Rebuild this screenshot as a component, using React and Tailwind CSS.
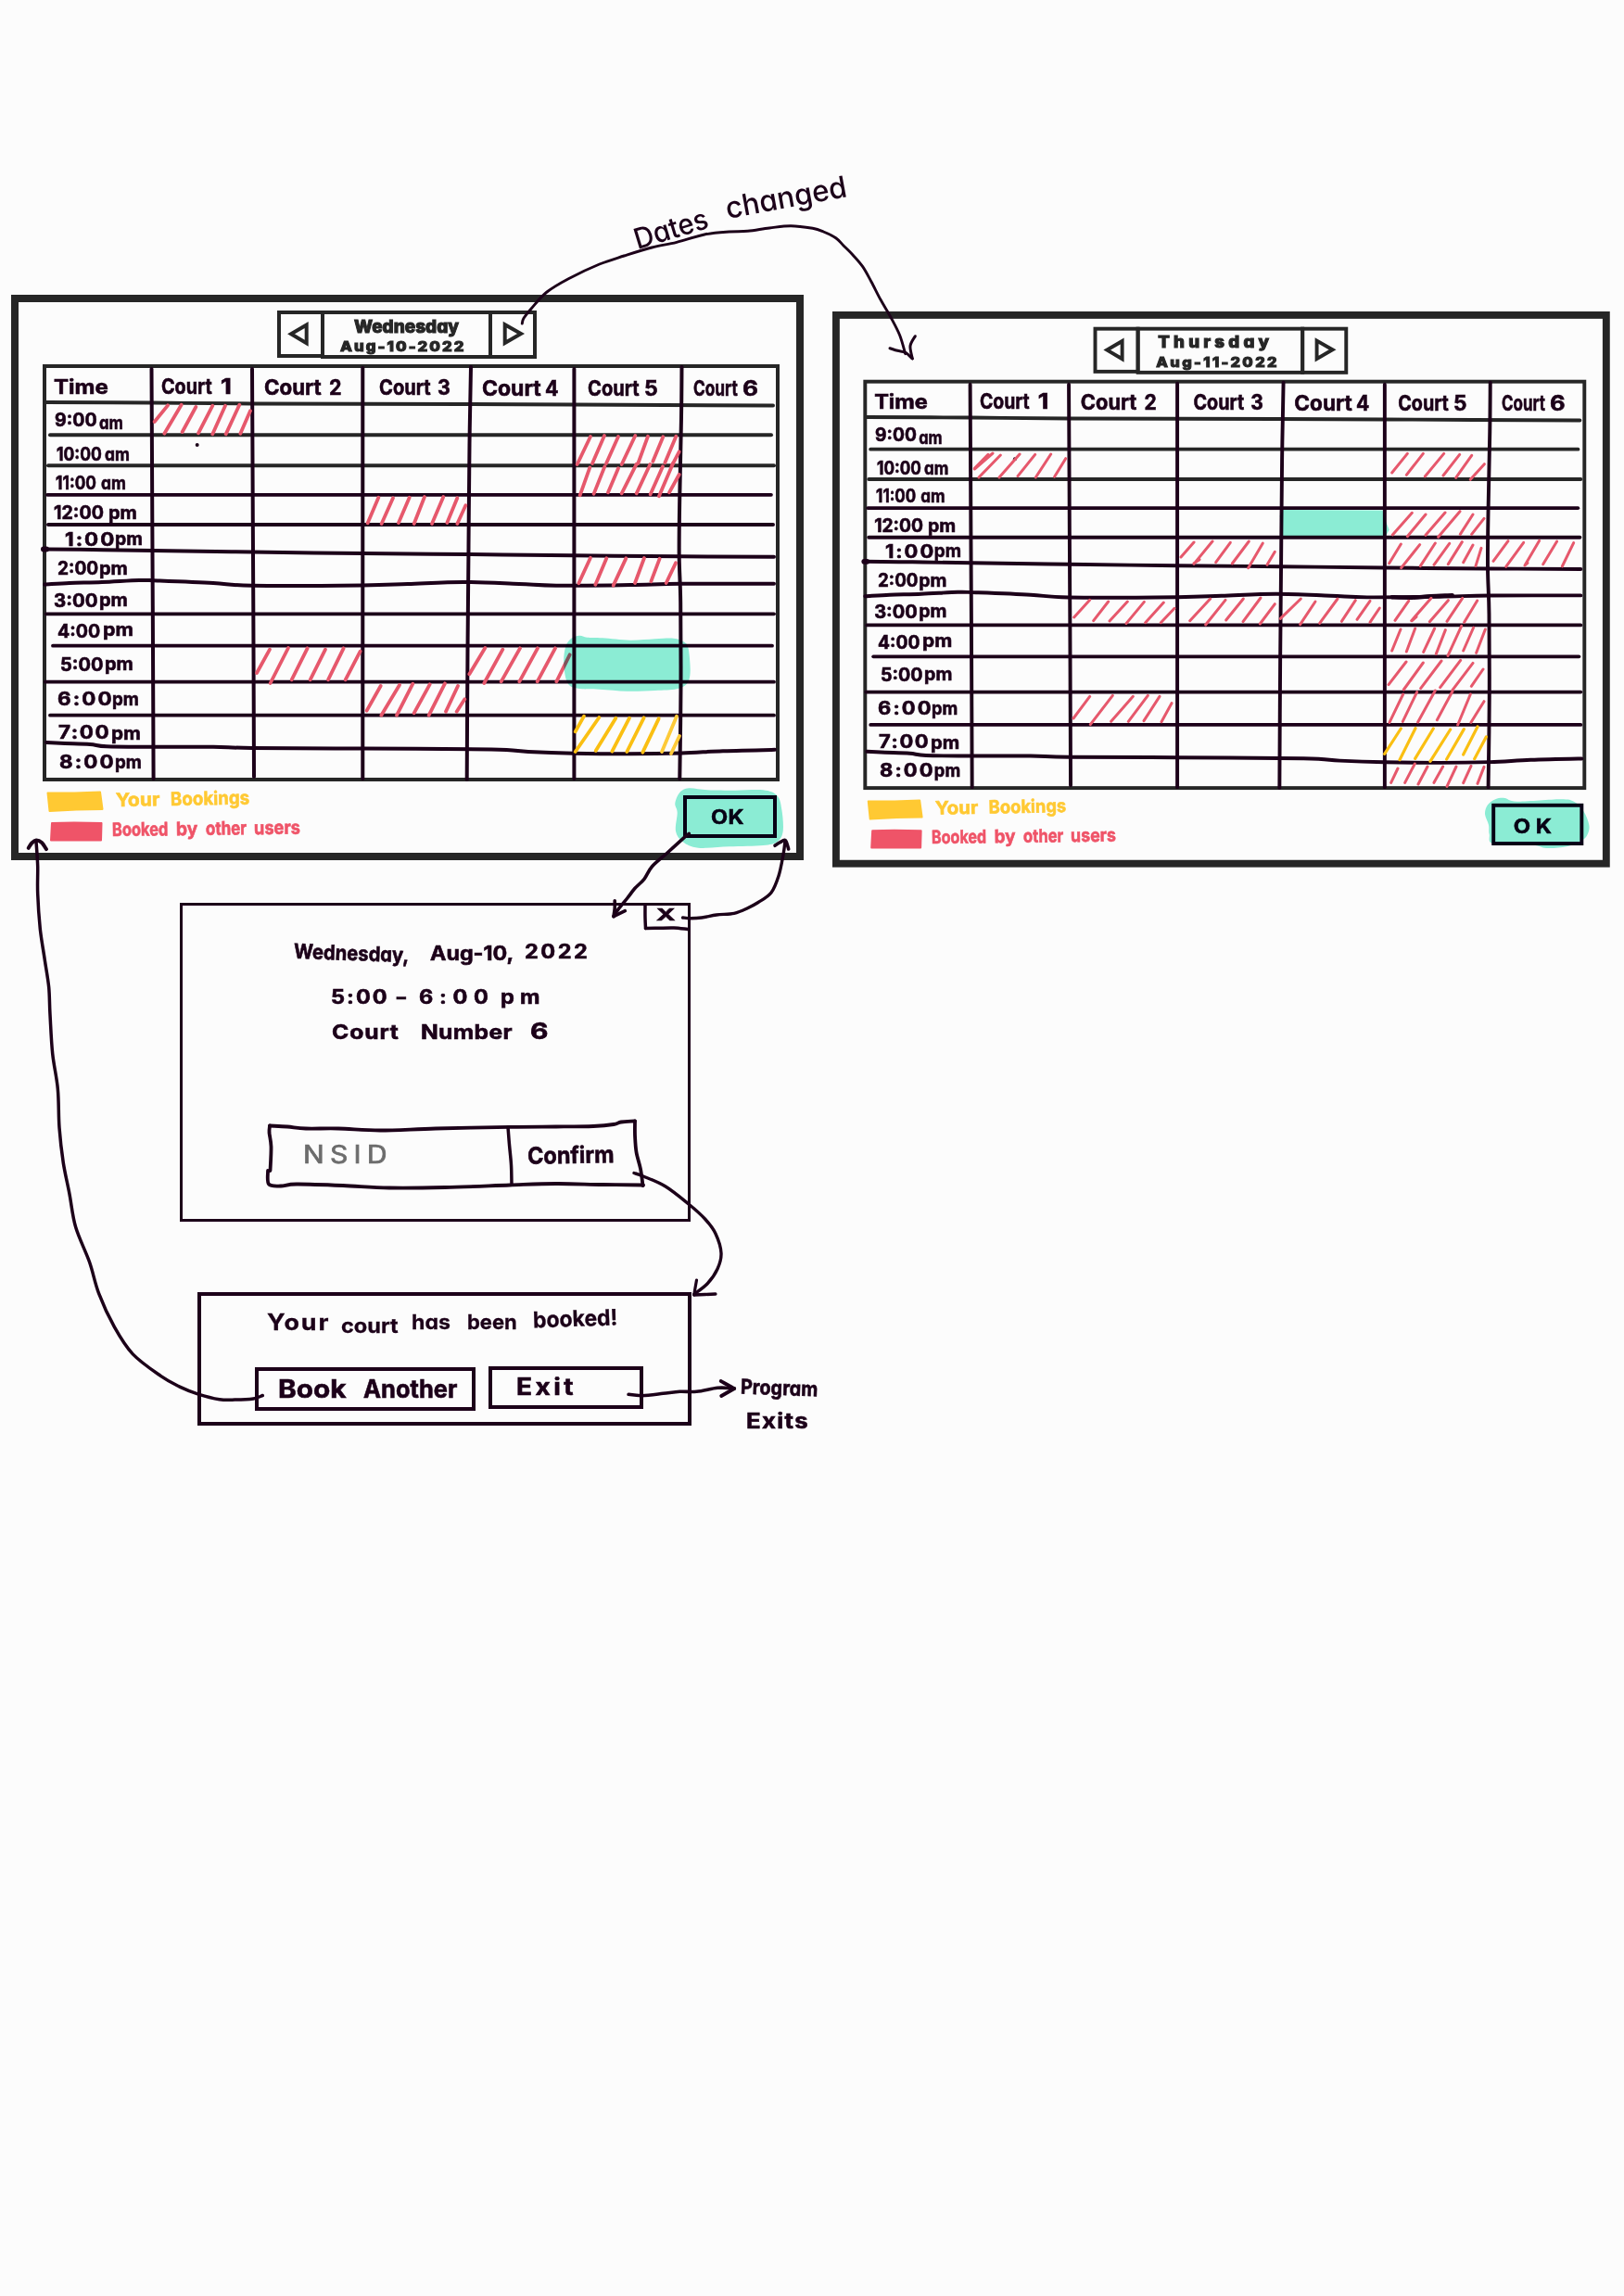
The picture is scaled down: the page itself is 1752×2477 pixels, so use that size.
import React, { useLayoutEffect, useRef, useState } from "react";

const PEN = "#1c0019";
const CHARCOAL = "#262626";
const RED = "#e6586c";
const GOLD = "#fabf12";
const MINT = "#8deFd7";

// Each frame maps local pen coordinates to the sheet: [x, y, x scale, y scale].
const T = 1 / 3;
const F = {
  a: [0, 310, T, T],
  b: [430, 310, T, T],
  c: [0, 620, T, T],
  d: [430, 620, T, T],
  e: [890, 320, T, T],
  f: [1310, 320, T, T],
  g: [890, 630, T, T],
  h: [1310, 630, T, T],
  top: [540, 170, T, T],
  modal: [180, 960, 620 / 1568, T],
  done: [190, 1300, 710 / 1568, T],
  left: [0, 880, T, 660 / 1568],
  page: [0, 0, 1, 1],
};

// Smooth pen stroke through a list of points (Catmull-Rom to Bezier).
function curve(frame, pts, closed = false) {
  const [ox, oy, sx, sy] = F[frame];
  const p = pts.map(([x, y]) => [ox + x * sx, oy + y * sy]);
  const n = p.length;
  const at = (i) => (closed ? p[(i + n) % n] : p[Math.max(0, Math.min(n - 1, i))]);
  let d = `M${p[0][0].toFixed(1)} ${p[0][1].toFixed(1)}`;
  for (let i = 0; i < (closed ? n : n - 1); i++) {
    const [a, b, c, e] = [at(i - 1), at(i), at(i + 1), at(i + 2)];
    const c1 = [b[0] + (c[0] - a[0]) / 6, b[1] + (c[1] - a[1]) / 6];
    const c2 = [c[0] - (e[0] - b[0]) / 6, c[1] - (e[1] - b[1]) / 6];
    d += `C${[...c1, ...c2, ...c].map((v) => v.toFixed(1)).join(" ")}`;
  }
  return d;
}

function Stroke({ f = "page", pts, w = 4, color = PEN }) {
  return <path d={curve(f, pts)} stroke={color} strokeWidth={w} fill="none" strokeLinecap="round" strokeLinejoin="round" />;
}

function Hatch({ f, lines, w = 3.8, color = RED }) {
  const [ox, oy, sx, sy] = F[f];
  return (
    <path
      d={lines.map(([a, b, c, d]) => `M${ox + a * sx} ${oy + b * sy}L${ox + c * sx} ${oy + d * sy}`).join("")}
      stroke={color}
      strokeWidth={w}
      strokeLinecap="round"
      fill="none"
    />
  );
}

// Text fitted to the width of its box: glyphs stretch a little, spacing takes up the rest.
const MAX_STRETCH = 1.12;
function Ink({ children, className = "" }) {
  const outer = useRef(null);
  const inner = useRef(null);
  const [fit, setFit] = useState({ scale: 1, gap: 0 });
  useLayoutEffect(() => {
    const box = outer.current.clientWidth;
    const natural = inner.current.offsetWidth;
    const ratio = box / natural;
    const n = String(children).length;
    if (ratio > MAX_STRETCH && n > 1) {
      setFit({ scale: MAX_STRETCH, gap: (box / MAX_STRETCH - natural) / (n - 1) });
    } else {
      setFit({ scale: ratio, gap: 0 });
    }
  }, []);
  return (
    <div ref={outer} className={"shrink-0 whitespace-nowrap leading-none " + className}>
      <span
        ref={inner}
        className="inline-block origin-left"
        style={{ transform: `scaleX(${fit.scale})`, letterSpacing: fit.gap ? `${fit.gap}px` : undefined }}
      >
        {children}
      </span>
    </div>
  );
}

const courts = [
  ["1", "pl-[10px] pt-[9px]", "w-[55px]", "ml-[9px] w-[12px]"],
  ["2", "pl-[13px] pt-[10px]", "w-[62px]", "ml-[8px] w-[14px]"],
  ["3", "pl-[18px] pt-[10px]", "w-[56px]", "ml-[7px] w-[14px]"],
  ["4", "pl-[14px] pt-[11px]", "w-[64px]", "ml-[4px] w-[15px]"],
  ["5", "pl-[15px] pt-[11px]", "w-[56px]", "ml-[5px] w-[15px]"],
  ["6", "pl-[14px] pt-[11px]", "w-[48px]", "ml-[5px] w-[17px]"],
];

const times = [
  ["9:00", "am", "pl-[9px] pt-[8px]", "w-[46px]", "ml-[2px] mt-[3px] w-[26px]"],
  ["10:00", "am", "pl-[11px] pt-[11px]", "w-[49px]", "ml-[3px] w-[27px]"],
  ["11:00", "am", "pl-[10px] pt-[9px]", "w-[44px]", "ml-[5px] w-[27px]"],
  ["12:00", "pm", "pl-[8px] pt-[9px]", "w-[54px]", "ml-[5px] w-[31px]"],
  ["1:00", "pm", "pl-[20px] pt-[6px]", "w-[53px]", "ml-[1px] -mt-[1px] w-[30px]"],
  ["2:00", "pm", "pl-[12px] pt-[9px]", "w-[44px]", "ml-[1px] w-[31px]"],
  ["3:00", "pm", "pl-[8px] pt-[10px]", "w-[48px]", "ml-[1px] -mt-[1px] w-[31px]"],
  ["4:00", "pm", "pl-[12px] pt-[9px]", "w-[46px]", "ml-[3px] -mt-[2px] w-[33px]"],
  ["5:00", "pm", "pl-[15px] pt-[10px]", "w-[46px]", "ml-[2px] -mt-[1px] w-[31px]"],
  ["6:00", "pm", "pl-[12px] pt-[8px]", "w-[59px]", "w-[29px]"],
  ["7:00", "pm", "pl-[13px] pt-[8px]", "w-[55px]", "ml-[2px] mt-[1px] w-[32px]"],
  ["8:00", "pm", "pl-[14px] pt-[7px]", "w-[59px]", "ml-[1px] w-[29px]"],
];

function TableLines() {
  const dark = { color: CHARCOAL };
  return (
    <svg className="absolute -left-2 -top-2 h-[610px] w-[855px] overflow-visible" viewBox="12 318 855 610">
      <Stroke {...dark} pts={[[49, 434], [165, 434.5], [272, 435.5], [500, 436], [619, 436.5], [834, 437.5]]} />
      <Stroke {...dark} pts={[[54, 469.2], [832, 469.2]]} />
      <Stroke {...dark} pts={[[52, 502.2], [835, 502.2]]} />
      <Stroke w={3.7} pts={[[51, 533.8], [832, 533.8]]} />
      <Stroke pts={[[52, 566], [834, 566]]} />
      <Stroke pts={[[47, 592.5], [100, 593], [165, 594], [272, 595.5], [391, 597], [505, 598], [619, 599.3], [735, 600.3], [835, 600.8]]} />
      <path d="M47 592.5h3" stroke={PEN} strokeWidth="6" strokeLinecap="round" />
      <Stroke pts={[[48, 630.5], [75, 629], [110, 628], [150, 626], [170, 626.5], [230, 629], [272, 631.8], [391, 631.5], [440, 630], [500, 628], [560, 630], [600, 631.7], [680, 631], [735, 629.8], [835, 629.7]]} />
      <Stroke w={3.8} pts={[[50, 662.3], [835, 662.3]]} />
      <Stroke w={3.8} pts={[[57, 696.7], [833, 696.7]]} />
      <Stroke w={3.8} pts={[[49, 735.7], [835, 735.7]]} />
      <Stroke w={3.8} pts={[[54, 771.7], [835, 771.7]]} />
      <Stroke pts={[[50, 801], [70, 802], [97, 803], [115, 805.3], [165, 805.8], [230, 805.8], [272, 807], [391, 807.5], [530, 808.5], [570, 811], [619, 812.7], [680, 813.3], [735, 812.5], [780, 810.2], [836, 808.8]]} />
      <Stroke pts={[[163.5, 398], [164.3, 560], [165, 700], [165.6, 840]]} />
      <Stroke pts={[[272, 398], [272.8, 560], [273.5, 700], [274, 838]]} />
      <Stroke pts={[[391.3, 397], [391.3, 840]]} />
      <Stroke pts={[[508, 396], [506.5, 480], [505.5, 590], [504.5, 700], [503.7, 841]]} />
      <Stroke pts={[[619.4, 398], [619.4, 840]]} />
      <Stroke pts={[[735.5, 396], [735, 450], [733.2, 540], [732.7, 600], [734.2, 650], [734.5, 740], [733.3, 840]]} />
      <circle cx="212.7" cy="480" r="2" fill={PEN} />
      <path d="M51.500 855.500l29 0 27.500-1 2.500 18.500-28 .5-29 1.500z" fill="#ffc933" stroke="#ffc933" strokeWidth="2" strokeLinejoin="round" />
      <path d="M56 888l24-.5 29.500.5-.5 18.500-29 0-25 0z" fill="#ef5468" stroke="#ef5468" strokeWidth="2" strokeLinejoin="round" />
    </svg>
  );
}

function Board({ day, date, dayBox, dateBox, ok, okBox }) {
  return (
    <section className="relative h-[610px] w-[855px] shrink-0 border-8 border-[#262626]">
      <header className="ml-[279px] mt-[9px] flex text-[#262626]">
        <button className="h-[51px] w-[51px] border-4 border-current">
          <svg viewBox="303 340 43 43" className="h-[43px] w-[43px]">
            <path d="M330.700 351.500v19.700L314 361.300z" fill="none" stroke={CHARCOAL} strokeWidth="4" />
          </svg>
        </button>
        <div className="relative -ml-1 h-[52px] w-[185px] border-4 border-current font-extrabold [-webkit-text-stroke:1px]">
          <Ink className={dayBox}>{day}</Ink>
          <Ink className={dateBox}>{date}</Ink>
        </div>
        <button className="-ml-1 h-[52px] w-[52px] border-4 border-current">
          <svg viewBox="531 340 44 44" className="h-[44px] w-[44px]">
            <path d="M544.700 351.200v19.800L562 361z" fill="none" stroke={CHARCOAL} strokeWidth="4" />
          </svg>
        </button>
      </header>

      <div className="ml-[26px] mt-[6px] grid h-[450px] w-[795px] grid-cols-[114px_108px_119px_115px_113px_115px_103px] grid-rows-[38px_34px_33px_32px_32px_28px_34px_34px_35px_39px_36px_33px_34px] border-4 border-[#262626]">
        <div className="pl-[8px] pt-[9px]">
          <Ink className="w-[59px] text-[22px]">Time</Ink>
        </div>
        {courts.map(([num, pad, w, numBox]) => (
          <div key={num} className={"flex text-[23px] " + pad}>
            <Ink className={w}>Court</Ink>
            <Ink className={numBox}>{num}</Ink>
          </div>
        ))}
        {times.map(([hour, half, pad, hourBox, halfBox]) => (
          <React.Fragment key={hour}>
            <div className={"flex text-[20px] " + pad}>
              <Ink className={hourBox}>{hour}</Ink>
              <Ink className={halfBox}>{half}</Ink>
            </div>
            {courts.map(([num]) => (
              <div key={num} />
            ))}
          </React.Fragment>
        ))}
      </div>

      <footer className="flex justify-between pl-[101px] pr-[21px]">
        <div>
          <div className="ml-[4px] mt-[10px] flex origin-left -rotate-1 text-[20px] text-[#ffc933]">
            <Ink className="w-[47px]">Your</Ink>
            <Ink className="ml-[12px] w-[85px]">Bookings</Ink>
          </div>
          <div className="mt-[12px] flex origin-left -rotate-[0.7deg] text-[20px] text-[#ef5468]">
            <Ink className="w-[60px]">Booked</Ink>
            <Ink className="ml-[9px] w-[23px]">by</Ink>
            <Ink className="ml-[9px] w-[44px]">other</Ink>
            <Ink className="ml-[8px] w-[50px]">users</Ink>
          </div>
        </div>
        <button className="mt-[15px] h-[46px] w-[101px] border-4 border-[#0b0018] text-left text-[#0b0018]">
          <Ink className={okBox}>{ok}</Ink>
        </button>
      </footer>
      <TableLines />
    </section>
  );
}

function WednesdayHighlights() {
  return (
    <svg className="absolute left-0 top-0 h-[610px] w-[855px] mix-blend-multiply" viewBox="12 318 855 610">
      <path fill={MINT} d={curve("d", [[540, 235], [558, 207], [585, 197], [610, 203], [660, 205], [750, 212], [830, 208], [890, 206], [925, 218], [938, 240], [944, 310], [935, 350], [900, 370], [830, 375], [740, 377], [650, 371], [580, 368], [547, 350], [535, 290]], true)} />
      <path fill={MINT} d={curve("d", [[895, 740], [910, 705], [940, 691], [1000, 697], [1090, 698], [1180, 697], [1225, 715], [1240, 760], [1244, 830], [1225, 865], [1180, 876], [1070, 880], [970, 884], [920, 865], [897, 830], [902, 770]], true)} />
    </svg>
  );
}

function WednesdayHatch() {
  return (
    <svg className="absolute left-0 top-0 h-[610px] w-[855px]" viewBox="12 318 855 610">
      <Hatch f="a" lines={[[543, 382, 500, 435], [587, 380, 532, 473], [634, 387, 590, 468], [688, 383, 642, 472], [729, 383, 688, 475], [775, 380, 731, 475], [810, 400, 778, 473], [1225, 680, 1190, 763], [1272, 682, 1235, 765], [1325, 680, 1290, 762]]} />
      <Hatch f="b" lines={[[84, 678, 50, 765], [145, 678, 108, 765], [190, 682, 157, 762], [217, 706, 190, 765]]} />
      <Hatch f="b" lines={[[621, 483, 578, 573], [666, 480, 627, 570], [711, 483, 672, 570], [766, 480, 722, 573], [807, 482, 775, 570], [856, 484, 823, 563], [898, 482, 862, 568], [908, 532, 884, 578]]} />
      <Hatch f="b" lines={[[619, 583, 587, 673], [667, 580, 632, 668], [711, 586, 678, 664], [770, 572, 722, 667], [814, 573, 770, 667], [855, 580, 815, 670], [888, 570, 843, 676], [908, 606, 876, 664]]} />
      <Hatch f="b" lines={[[621, 875, 583, 958], [673, 877, 637, 962], [736, 877, 695, 965], [795, 876, 765, 957], [845, 878, 817, 952], [897, 892, 866, 957]]} />
      <Hatch f="c" lines={[[873, 242, 831, 318], [933, 237, 875, 351], [995, 238, 944, 340], [1053, 242, 1004, 340], [1112, 238, 1062, 340], [1166, 248, 1118, 340]]} />
      <Hatch f="d" lines={[[280, 237, 229, 322], [337, 242, 277, 351], [393, 238, 332, 346], [450, 238, 391, 346], [507, 238, 449, 346], [554, 259, 511, 346]]} />
      <Hatch f="c" lines={[[1232, 360, 1187, 440], [1293, 357, 1234, 455], [1336, 353, 1284, 455]]} />
      <Hatch f="d" lines={[[101, 355, 50, 448], [150, 352, 98, 455], [192, 360, 153, 443], [214, 403, 188, 443]]} />
      <Hatch f="d" color={GOLD} lines={[[600, 458, 572, 508], [649, 462, 572, 573], [703, 464, 638, 570], [747, 464, 691, 572], [794, 463, 739, 573], [842, 466, 790, 575]]} />
      <Hatch f="d" color="#fdca38" lines={[[900, 458, 852, 573], [909, 522, 882, 579]]} />
    </svg>
  );
}

function ThursdayHighlights() {
  return (
    <svg className="absolute left-0 top-0 h-[600px] w-[840px] mix-blend-multiply" viewBox="898 336 840 600">
      <path fill={MINT} d="M1384 550L1491.700 550.500L1494 560L1498.700 571.500L1496 576.500L1492.700 578.500H1384L1380.700 556.500z" />
      <path fill={MINT} d={curve("h", [[876, 745], [885, 715], [910, 697], [940, 693], [980, 704], [1120, 697], [1165, 705], [1195, 735], [1213, 780], [1208, 810], [1190, 830], [1140, 850], [1075, 855], [1030, 845], [905, 842], [890, 810], [888, 780]], true)} />
    </svg>
  );
}

function ThursdayHatch() {
  const w = 3;
  return (
    <svg className="absolute left-0 top-0 h-[600px] w-[840px]" viewBox="898 336 840 600">
      <Stroke f="h" w={4.5} pts={[[575, 43], [640, 44], [700, 40], [770, 37]]} />
      <Hatch f="e" w={w} lines={[[543, 507, 484, 558], [528, 511, 484, 556], [568, 513, 498, 585], [630, 510, 564, 585], [680, 511, 624, 581], [731, 510, 682, 585], [779, 524, 743, 583], [1194, 795, 1152, 843], [1254, 792, 1194, 865], [1212, 851, 1194, 863]]} />
      <Hatch f="f" w={w} lines={[[625, 508, 575, 570], [676, 508, 622, 577], [743, 508, 682, 582], [794, 511, 741, 579], [833, 514, 782, 586], [874, 542, 829, 592]]} />
      <Hatch f="f" w={w} lines={[[640, 700, 577, 771], [684, 705, 625, 776], [747, 699, 684, 772], [795, 695, 725, 778], [837, 705, 796, 769], [873, 718, 833, 769]]} />
      <Hatch f="f" w={w} lines={[[604, 801, 566, 863], [665, 803, 605, 878], [715, 798, 667, 872], [761, 799, 711, 868], [802, 794, 757, 866], [837, 804, 806, 860], [864, 814, 846, 872]]} />
      <Hatch f="f" w={w} lines={[[951, 791, 903, 856], [1001, 796, 944, 874], [1052, 790, 1005, 870], [1014, 862, 1005, 870], [1109, 792, 1064, 866], [1163, 797, 1126, 873]]} />
      <Hatch f="f" w={w} lines={[[52, 796, 5, 860], [112, 792, 58, 864], [157, 798, 110, 878], [196, 826, 171, 868]]} />
      <Hatch f="g" w={w} lines={[[857, 52, 806, 108], [917, 57, 869, 119], [979, 57, 921, 120], [1033, 58, 975, 128], [1096, 60, 1037, 125], [1131, 79, 1087, 125], [1247, 48, 1181, 119], [1296, 52, 1232, 132]]} />
      <Hatch f="h" w={w} lines={[[94, 48, 38, 117], [150, 45, 93, 122], [196, 65, 148, 129], [280, 48, 214, 112], [327, 57, 278, 131], [399, 48, 341, 127], [457, 53, 412, 121], [504, 55, 462, 115], [535, 78, 504, 124]]} />
      <Hatch f="h" w={w} lines={[[629, 55, 585, 118], [702, 46, 638, 119], [654, 106, 640, 119], [757, 53, 697, 122], [803, 46, 753, 121], [851, 54, 809, 124]]} />
      <Hatch f="h" w={w} lines={[[603, 147, 575, 216], [650, 144, 622, 219], [713, 144, 677, 220], [748, 149, 718, 226], [800, 136, 756, 232], [839, 141, 806, 216], [877, 147, 848, 223]]} />
      <Hatch f="h" w={w} lines={[[621, 252, 564, 326], [676, 255, 613, 342], [735, 249, 668, 338], [797, 247, 731, 335], [837, 256, 771, 343], [870, 276, 832, 331]]} />
      <Hatch f="h" w={w} lines={[[611, 357, 567, 448], [656, 350, 610, 445], [715, 345, 659, 447], [771, 347, 721, 440], [829, 357, 788, 456], [873, 380, 831, 448]]} />
      <Hatch f="h" w={3.2} color={GOLD} lines={[[604, 468, 551, 550], [651, 467, 600, 569], [709, 468, 650, 565], [764, 471, 699, 574], [808, 470, 752, 567], [852, 462, 806, 552], [880, 495, 842, 566]]} />
      <Hatch f="h" w={w} lines={[[594, 597, 572, 643], [649, 582, 617, 643], [690, 591, 660, 648], [740, 591, 711, 643], [783, 591, 753, 655], [831, 589, 806, 644], [873, 592, 852, 646]]} />
      <Hatch f="g" w={w} lines={[[857, 364, 804, 435], [931, 361, 859, 455], [997, 364, 926, 445], [1045, 361, 982, 445], [1083, 364, 1032, 443], [1122, 386, 1089, 446]]} />
    </svg>
  );
}

function ConfirmDialog() {
  return (
    <section className="relative ml-[194px] mt-[28px] h-[344px] w-[551px] border-[3px] border-[#1c0019]">
      <svg className="absolute -left-[3px] -top-[3px] h-[344px] w-[551px]" viewBox="194 974 551 344">
        <Stroke w={3.5} pts={[[696, 976], [696, 990], [696.5, 1001.5]]} />
        <Stroke w={3.5} pts={[[696.5, 1001.5], [710, 1001.3], [727, 1001], [742, 1002.5]]} />
        <Stroke w={3.8} pts={[[291, 1214.5], [310, 1215.5], [330, 1217.5], [365, 1217.5], [410, 1219.5], [470, 1217.5], [550, 1215.8], [600, 1215.5], [640, 1215], [662, 1213], [670, 1210.5], [685, 1209.5]]} />
        <Stroke w={3.8} pts={[[685, 1209.5], [685, 1225], [686.5, 1243], [691, 1261], [693.5, 1279]]} />
        <Stroke w={3.8} pts={[[694, 1278.5], [650, 1278], [600, 1277], [550, 1278.5], [480, 1281], [420, 1281.5], [370, 1279], [320, 1277.5], [303, 1279.5], [290, 1277.5], [289, 1263]]} />
        <Stroke w={3.8} pts={[[291, 1214.5], [290.5, 1222], [292.5, 1237], [291.5, 1263]]} />
        <Stroke w={3.5} pts={[[548, 1216], [549.5, 1235], [551.5, 1257], [552, 1278]]} />
      </svg>
      <div className="ml-[511px] mt-[1px] w-[21px]">
        <Ink className="w-[20px] text-[18px]">X</Ink>
      </div>
      <div className="ml-[120px] mt-[21px] flex text-[22px]">
        <Ink className="w-[124px] rotate-2">Wednesday,</Ink>
        <Ink className="ml-[23px] w-[90px]">Aug-10,</Ink>
        <Ink className="ml-[12px] -mt-px w-[68px] text-[21px]">2022</Ink>
      </div>
      <div className="ml-[160px] mt-[26px] flex text-[21px]">
        <Ink className="w-[61px]">5:00</Ink>
        <Ink className="ml-[8px] w-[14px]">-</Ink>
        <Ink className="ml-[12px] w-[75px]">6:00</Ink>
        <Ink className="ml-[13px] w-[42px]">pm</Ink>
      </div>
      <div className="ml-[161px] mt-[16px] flex text-[22px]">
        <Ink className="w-[72px]">Court</Ink>
        <Ink className="ml-[24px] w-[98px]">Number</Ink>
        <Ink className="ml-[20px] -mt-px w-[20px] text-[24px]">6</Ink>
      </div>
      <div className="ml-[130px] mt-[107px] flex">
        <Ink className="w-[90px] text-[27px] font-normal text-[#6c6c6c] [-webkit-text-stroke:0.7px]">NSID</Ink>
        <Ink className="ml-[152px] mt-[2px] w-[94px] -rotate-1 text-[25px]">Confirm</Ink>
      </div>
    </section>
  );
}

function BookedDialog() {
  return (
    <section className="ml-[213px] mt-[76px] h-[144px] w-[533px] border-4 border-[#1c0019]">
      <div className="ml-[71px] mt-[17px] flex text-[22px] [-webkit-text-stroke:0.3px]">
        <Ink className="w-[66px] text-[24px]">Your</Ink>
        <Ink className="ml-[14px] mt-[4px] w-[62px]">court</Ink>
        <Ink className="ml-[14px] w-[42px]">has</Ink>
        <Ink className="ml-[18px] w-[54px]">been</Ink>
        <Ink className="ml-[17px] -mt-[4px] w-[91px] -rotate-2 text-[24px]">booked!</Ink>
      </div>
      <div className="ml-[58px] mt-[33px] flex gap-[14px] text-[27px]">
        <button className="mt-px flex h-[47px] w-[238px] border-4 border-[#1c0019] pl-[17px] pt-[6px]">
          <Ink className="w-[74px]">Book</Ink>
          <Ink className="ml-[22px] w-[101px]">Another</Ink>
        </button>
        <button className="flex h-[46px] w-[167px] border-4 border-[#1c0019] pl-[27px] pt-[6px] text-left text-[25px]">
          <Ink className="-ml-[1px] w-[62px]">Exit</Ink>
        </button>
      </div>
    </section>
  );
}

function Arrows() {
  return (
    <svg className="pointer-events-none absolute left-0 top-0 h-[2477px] w-[1752px]" viewBox="0 0 1752 2477">
      <Stroke f="top" w={2.9} pts={[[70, 537], [75, 520], [100, 488], [150, 435], [220, 392], [320, 345], [400, 318], [490, 291], [570, 274], [660, 249], [740, 240], [800, 238], [870, 228], [940, 221], [1010, 229], [1045, 240], [1085, 260], [1110, 285], [1140, 315], [1172, 353], [1200, 402], [1230, 460], [1262, 515], [1292, 575], [1310, 635]]} />
      <Stroke f="top" w={3} pts={[[1260, 617], [1285, 625], [1310, 631], [1333, 651]]} />
      <Stroke f="top" w={3} pts={[[1333, 650], [1326, 610], [1342, 578]]} />

      <Stroke f="d" w={3.6} pts={[[940, 838], [925, 850], [870, 900], [820, 945], [795, 985], [765, 1015], [740, 1047], [710, 1084], [697, 1104]]} />
      <Stroke f="modal" w={3.6} pts={[[1222, 35], [1222, 60], [1219, 86]]} />
      <Stroke f="modal" w={3.6} pts={[[1219, 86], [1250, 68]]} />

      <Stroke w={3.4} pts={[[736.5, 990], [745, 990.7], [757, 990], [773, 987], [792, 985.3], [806, 980], [818, 973.5], [832, 963], [840, 945], [845, 922], [847, 907]]} />
      <Stroke f="d" w={3.6} pts={[[1218, 877], [1235, 866], [1252, 860], [1262, 888]]} />

      <Stroke w={3.4} pts={[[684, 1265.5], [694, 1269], [718, 1280], [743.5, 1299.5], [760.5, 1315], [772, 1331], [778, 1352], [774, 1369], [763, 1385], [749, 1396]]} />
      <Stroke f="done" w={3.2} pts={[[1240, 243], [1234, 291]]} />
      <Stroke f="done" w={3.4} pts={[[1234, 291], [1285, 288]]} />

      <Stroke f="left" w={3.5} pts={[[850, 1486], [820, 1494], [760, 1497], [710, 1496], [640, 1482], [580, 1463], [520, 1436], [430, 1380], [370, 1310], [320, 1225], [290, 1145], [245, 1055], [225, 970], [205, 890], [192, 800], [187, 700], [170, 610], [162, 510], [158, 440], [145, 370], [130, 290], [122, 200], [122, 130], [117, 66]]} />
      <Stroke f="left" w={4} pts={[[92, 83], [103, 70], [117, 63], [135, 69], [150, 86]]} />

      <Stroke f="done" w={3.6} pts={[[1078, 613], [1110, 617], [1160, 610], [1200, 604], [1240, 604], [1290, 592], [1325, 593]]} />
      <Stroke f="done" w={3.8} pts={[[1298, 570], [1330, 594]]} />
      <Stroke f="done" w={3.8} pts={[[1330, 594], [1299, 618]]} />
    </svg>
  );
}

export default function App() {
  return (
    <main className="relative h-[2477px] w-[1752px] overflow-hidden bg-[#fcfcfc] pt-[318px] font-['Inter','Noto_Sans',sans-serif] font-bold text-[#1c0019] [-webkit-text-stroke:0.6px] [font-feature-settings:'cv11']">
      <div className="flex h-[628px] pl-[12px]">
        <div className="relative h-[610px] w-[855px] shrink-0">
          <Board
            day="Wednesday"
            date="Aug-10-2022"
            dayBox="ml-[32px] mt-[4px] w-[113px] text-[19px]"
            dateBox="ml-[17px] mt-[4px] w-[134px] text-[15px]"
            ok="OK"
            okBox="ml-[26px] mt-[1px] w-[35px] text-[21px]"
          />
          <WednesdayHatch />
          <WednesdayHighlights />
        </div>
        <div className="relative ml-[31px] mt-[18px] h-[600px] w-[840px] shrink-0">
          <div className="origin-top-left scale-x-[0.981] scale-y-[0.983]">
            <Board
              day="Thursday"
              date="Aug-11-2022"
              dayBox="ml-[20px] mt-[5px] w-[122px] text-[17px]"
              dateBox="ml-[18px] mt-[5px] w-[133px] text-[15px]"
              ok="O K"
              okBox="ml-[20px] mt-[4px] w-[42px] text-[22px]"
            />
          </div>
          <ThursdayHatch />
          <ThursdayHighlights />
        </div>
      </div>

      <ConfirmDialog />
      <BookedDialog />

      <div className="absolute left-[689px] top-[242px] origin-bottom-left -rotate-[17deg] font-medium [-webkit-text-stroke:0px]">
        <Ink className="w-[82px] text-[31px]">Dates</Ink>
      </div>
      <div className="absolute left-[786px] top-[209px] origin-bottom-left -rotate-[10.5deg] font-medium [-webkit-text-stroke:0px]">
        <Ink className="w-[132px] text-[32px]">changed</Ink>
      </div>
      <div className="absolute left-[799px] top-[1486px] flex flex-col">
        <Ink className="w-[83px] rotate-2 text-[22px]">Program</Ink>
        <Ink className="ml-[6px] mt-[14px] w-[67px] text-[23px]">Exits</Ink>
      </div>

      <Arrows />
    </main>
  );
}
